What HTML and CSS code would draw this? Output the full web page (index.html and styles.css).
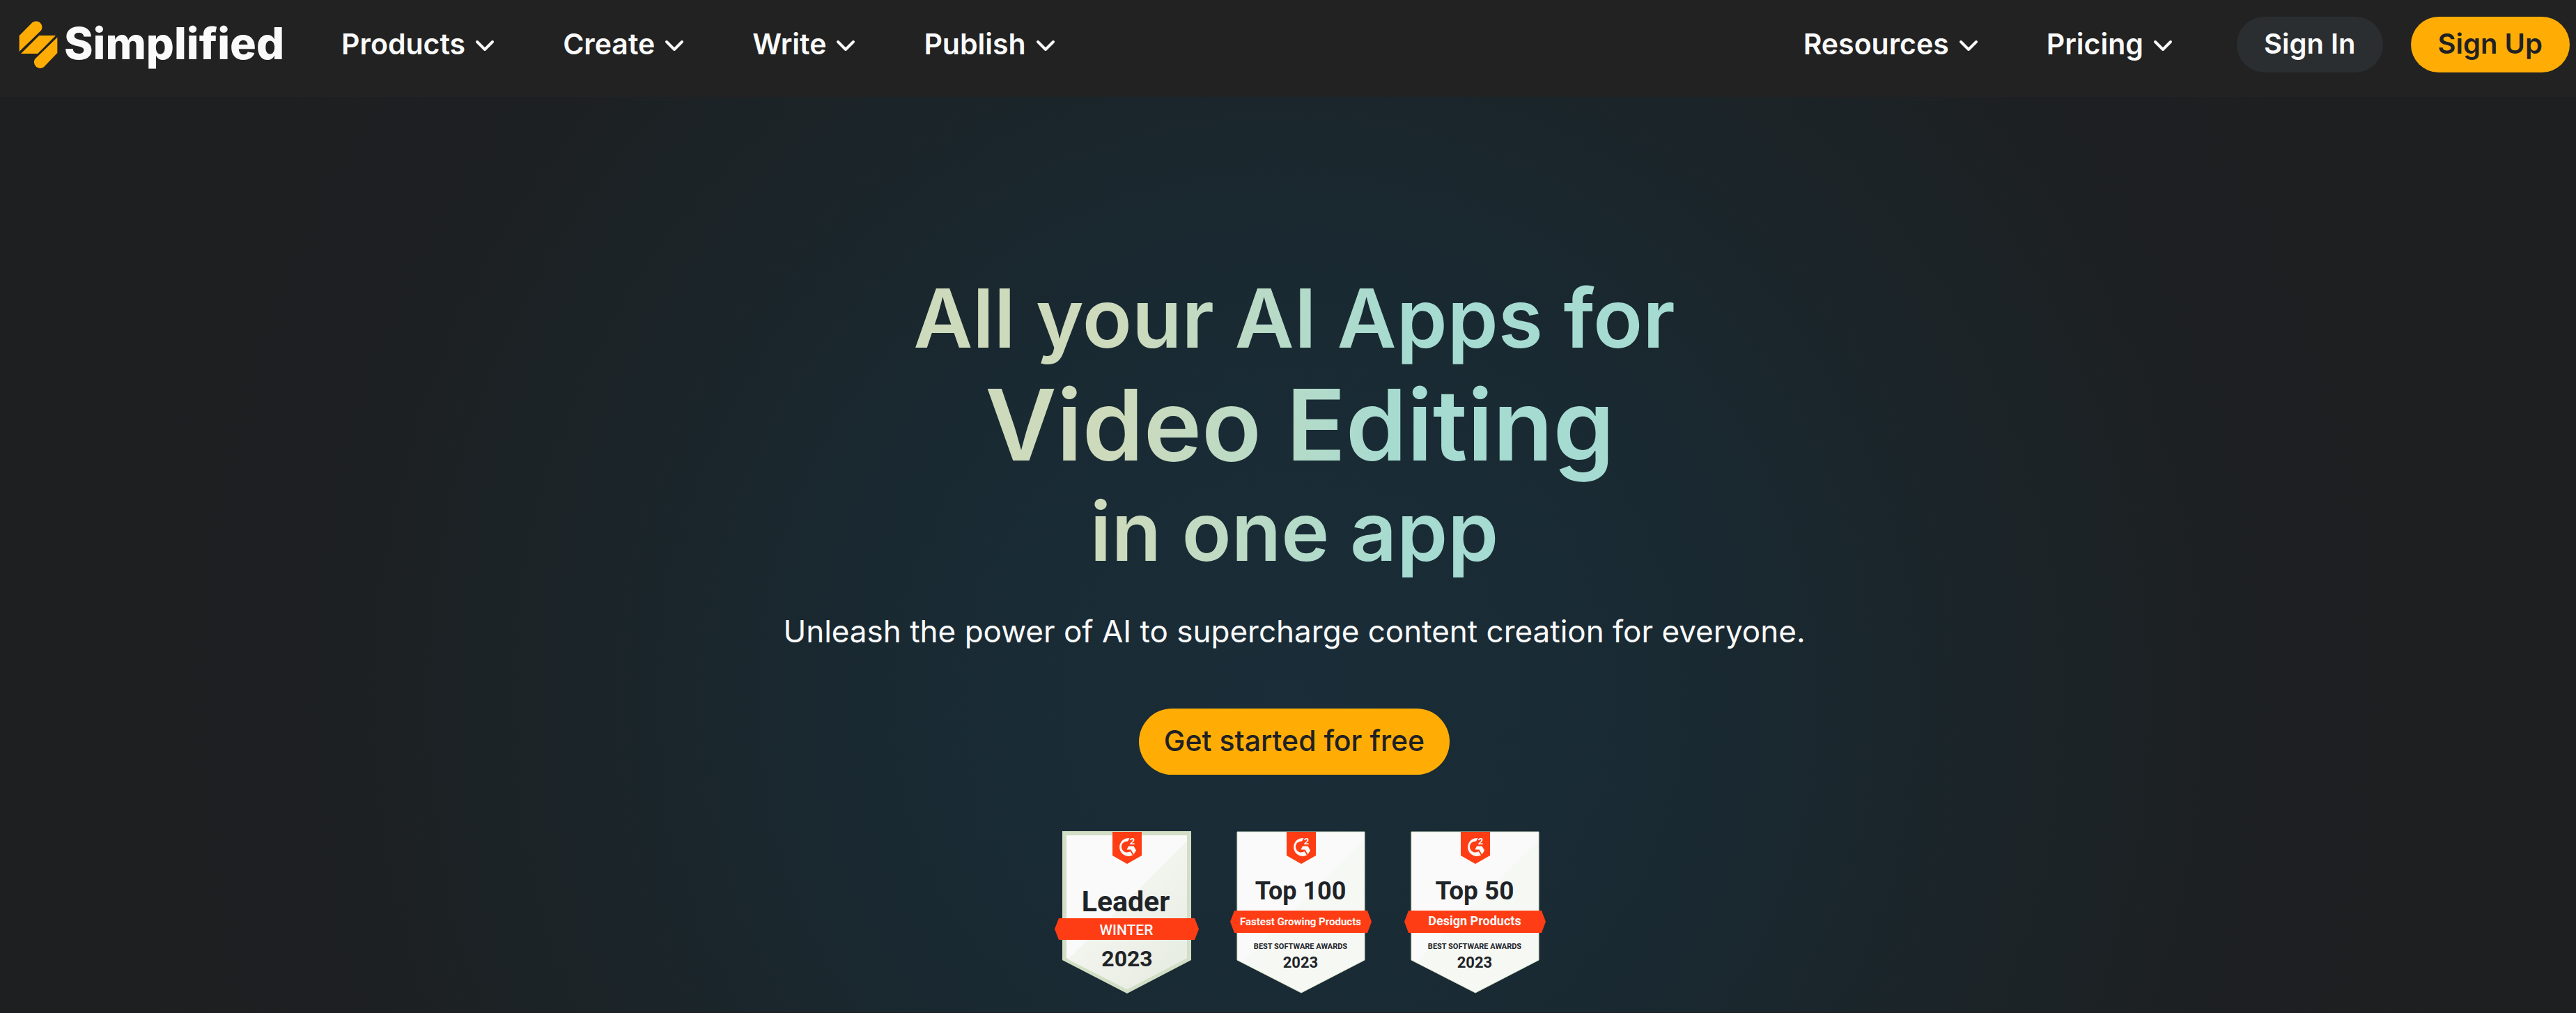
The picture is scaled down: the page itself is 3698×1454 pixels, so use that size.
FILE: index.html
```html
<!DOCTYPE html>
<html lang="en">
<head>
<meta charset="utf-8">
<meta name="viewport" content="width=device-width, initial-scale=1">
<title>Simplified</title>
<link rel="stylesheet" href="styles.css">
</head>
<body>
<svg width="0" height="0" class="defs" aria-hidden="true">
  <defs>
    <symbol id="chevron" viewBox="0 0 28 18"><path d="M3 3l11 11L25 3" fill="none" stroke="currentColor" stroke-width="4" stroke-linecap="round" stroke-linejoin="round"/></symbol>
    <linearGradient id="shade" gradientUnits="userSpaceOnUse" x1="100" y1="90" x2="180" y2="170">
      <stop offset="0" stop-color="#f3f5ef"/><stop offset="1" stop-color="#e9eee4"/>
    </linearGradient>
    <symbol id="g2" viewBox="0 0 42 46">
      <path d="M0 0H42V34L21 46 0 34Z" fill="#ff3d14"/>
      <path d="M24.500 9Q23 12 22 13.500A8 8 0 1 0 25.500 28L29 33.500A13 13 0 1 1 24.500 9Z" fill="#fafafa"/>
      <path d="M23 20.500H30.500L34 26.500 30.500 32.500 26.500 25.500H20.500Z" fill="#fafafa"/>
      <text x="28.500" y="18" class="g2-two">2</text>
    </symbol>
  </defs>
</svg>

<header class="header">
  <a class="logo" href="#">
    <svg class="logo-mark" viewBox="0 0 167 214" aria-hidden="true">
      <g fill="#ffad05">
        <path d="M2 69L58 12A26 26 0 0 1 96 46L2 137Z"/>
        <path d="M9 146L87 68H158L81 146Z"/>
        <path d="M165 76V143L107 203A26 26 0 0 1 69 169Z"/>
      </g>
    </svg>
    <span class="logo-word">Simplified</span>
  </a>
  <nav class="menu" aria-label="Main">
    <button class="menu-item" type="button">Products<svg class="chevron" aria-hidden="true"><use href="#chevron"/></svg></button>
    <button class="menu-item" type="button">Create<svg class="chevron" aria-hidden="true"><use href="#chevron"/></svg></button>
    <button class="menu-item" type="button">Write<svg class="chevron" aria-hidden="true"><use href="#chevron"/></svg></button>
    <button class="menu-item" type="button">Publish<svg class="chevron" aria-hidden="true"><use href="#chevron"/></svg></button>
  </nav>
  <div class="actions">
    <nav class="menu menu-side" aria-label="More">
      <button class="menu-item" type="button">Resources<svg class="chevron" aria-hidden="true"><use href="#chevron"/></svg></button>
      <button class="menu-item" type="button">Pricing<svg class="chevron" aria-hidden="true"><use href="#chevron"/></svg></button>
    </nav>
    <a class="pill pill-dark" href="#">Sign In</a>
    <a class="pill pill-accent" href="#">Sign Up</a>
  </div>
</header>

<main class="hero">
  <h1 class="title">
    <span class="title-line">All your AI Apps for</span>
    <span class="title-line title-big">Video Editing</span>
    <span class="title-line">in one app</span>
  </h1>
  <p class="subtitle">Unleash the power of AI to supercharge content creation for everyone.</p>
  <a class="cta" href="#">Get started for free</a>
  <div class="badges">
    <svg class="badge" viewBox="0 0 210 234" role="img" aria-label="G2 Leader, Winter 2023">
      <path d="M12 0H197V185L105 233 12 185Z" fill="#d2dec5"/>
      <path d="M18 6H191V182L105 227 18 182Z" fill="#fafafa"/>
      <path d="M191 14V182L105 227 20 184Z" fill="url(#shade)"/>
      <path d="M1 140.500L7 125H202L208 140.500 202 156H7Z" fill="#ff3d14"/>
      <use href="#g2" x="84" y="1" width="42" height="46"/>
      <text x="103" y="115" font-size="41" class="ink">Leader</text>
      <text x="104" y="149" font-size="21" class="ribbon ribbon-medium">WINTER</text>
      <text x="105" y="194" font-size="32" class="ink">2023</text>
    </svg>
    <svg class="badge" viewBox="0 0 210 234" role="img" aria-label="G2 Top 100 Fastest Growing Products, Best Software Awards 2023">
      <path d="M13 1H196V185L105 232 13 185Z" fill="#fafafa" stroke="#d2dec5" stroke-width="1"/>
      <path d="M195 14V185L105 231 20 188Z" fill="#f6f8f4"/>
      <path d="M3 130L9 114H200L206 130 200 146H9Z" fill="#ff3d14"/>
      <use href="#g2" x="84" y="1" width="42" height="46"/>
      <text x="104" y="98" font-size="36" class="ink">Top 100</text>
      <text x="104" y="135" font-size="15" class="ribbon">Fastest Growing Products</text>
      <text x="104" y="169" font-size="11" class="ink">BEST SOFTWARE AWARDS</text>
      <text x="104" y="196" font-size="22" class="ink">2023</text>
    </svg>
    <svg class="badge" viewBox="0 0 210 234" role="img" aria-label="G2 Top 50 Design Products, Best Software Awards 2023">
      <path d="M13 1H196V185L105 232 13 185Z" fill="#fafafa" stroke="#d2dec5" stroke-width="1"/>
      <path d="M195 14V185L105 231 20 188Z" fill="#f6f8f4"/>
      <path d="M3 130L9 114H200L206 130 200 146H9Z" fill="#ff3d14"/>
      <use href="#g2" x="84" y="1" width="42" height="46"/>
      <text x="104" y="98" font-size="37" class="ink">Top 50</text>
      <text x="104" y="135" font-size="18" class="ribbon">Design Products</text>
      <text x="104" y="169" font-size="11" class="ink">BEST SOFTWARE AWARDS</text>
      <text x="104" y="196" font-size="22" class="ink">2023</text>
    </svg>
  </div>
</main>
</body>
</html>
```
FILE: styles.css
```css
* {
  box-sizing: border-box;
}

body {
  margin: 0;
  min-height: 100vh;
  display: flex;
  flex-direction: column;
  background: #1e1f21;
  color: #fafafa;
  font-family: Inter, "Liberation Sans", sans-serif;
}

a {
  color: inherit;
  text-decoration: none;
}

.defs {
  position: absolute;
}

.header {
  display: flex;
  align-items: center;
  padding: 24px 9px 35px 27px;
  background: #222;
}

.logo {
  display: flex;
  align-items: center;
  gap: 9px;
  margin-right: 82px;
}

.logo-mark {
  width: 56px;
  height: 72px;
}

.logo-word {
  padding-bottom: 4px;
  font-size: 63px;
  font-weight: 800;
  line-height: 72px;
}

.menu {
  display: flex;
  gap: 98px;
  font-size: 41px;
}

.menu-item {
  display: flex;
  align-items: center;
  gap: 14px;
  padding: 0 0 3px;
  border: 0;
  background: none;
  color: inherit;
  font: inherit;
  font-weight: 600;
  line-height: 60px;
  cursor: pointer;
}

.chevron {
  width: 28px;
  height: 18px;
  margin-top: 6px;
}

.actions {
  display: flex;
  align-items: center;
  gap: 40px;
  margin-left: auto;
}

.menu-side {
  margin-right: 52px;
}

.pill {
  padding: 0 39px 3px;
  border-radius: 40px;
  font-size: 40px;
  font-weight: 600;
  line-height: 77px;
}

.pill-dark {
  background: #2a2e30;
}

.pill-accent {
  background: #ffad05;
  color: #1f2125;
}

.hero {
  flex: 1;
  display: flex;
  flex-direction: column;
  align-items: center;
  padding: 247px 0 26px 18px;
  border-bottom: 1px solid #1c1d20;
  background: radial-gradient(circle 1800px at 50% 66%, #1a2d38 0, #192a33 30%, #1b2428 58%, #1d2022 76%, #1e1f21 100%);
}

.title {
  margin: 0;
  font-size: 117px;
  font-weight: 600;
  line-height: 142px;
  text-align: center;
  color: transparent;
  background: linear-gradient(90deg, #cddabc 27%, #a5dbd1 65%);
  background-clip: text;
  -webkit-background-clip: text;
}

.title-line {
  display: block;
}

.title-big {
  padding-left: 16px;
  font-size: 141px;
  line-height: 164px;
}

.subtitle {
  margin: 42px 0 0;
  font-size: 44px;
  line-height: 60px;
}

.cta {
  margin-top: 81px;
  padding: 0 36px 3px;
  border-radius: 48px;
  background: #ffad05;
  color: #1f2125;
  font-size: 41px;
  font-weight: 500;
  line-height: 92px;
}

.badges {
  display: flex;
  gap: 40px;
  margin: 81px 0 0 20px;
}

.badge {
  width: 210px;
  height: 234px;
  font-family: Roboto, "Liberation Sans", sans-serif;
  font-weight: 700;
  text-anchor: middle;
}

.ink {
  fill: #1f2428;
}

.ribbon {
  fill: #fafafa;
}

.ribbon-medium {
  font-weight: 500;
}

.g2-two {
  fill: #fafafa;
  font-size: 13px;
  text-anchor: middle;
}
```
